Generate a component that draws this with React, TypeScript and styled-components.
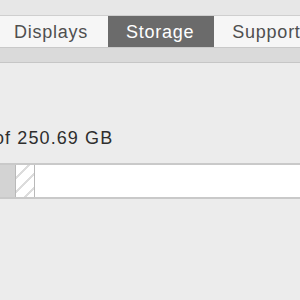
import styled, { createGlobalStyle } from 'styled-components';

const GlobalStyle = createGlobalStyle`
	html, body {
		margin: 0;
		padding: 0;
		background: #ececec;
	}
	body {
		width: 300px;
		height: 300px;
		overflow: hidden;
		font-family: 'Liberation Sans', Arial, sans-serif;
	}
`;

const tabs = ['Displays', 'Storage', 'Support'];
const activeTab = 'Storage';

const App = () => {
	return (
		<>
			<GlobalStyle />
			<Window>
				<Toolbar>
					<TabRow>
						{tabs.map((tab) => (
							<Tab key={tab} $active={tab === activeTab}>
								{tab}
							</Tab>
						))}
					</TabRow>
				</Toolbar>
				<Band />
				<Content>
					<Capacity>of 250.69 GB</Capacity>
					<StorageBar>
						<Segment $kind="used" $width={17} />
						<Segment $kind="purgeable" $width={19} />
						<Segment $kind="free" />
					</StorageBar>
				</Content>
			</Window>
		</>
	);
};

const Window = styled.div`
	width: 300px;
	height: 300px;
	overflow: hidden;
	display: flex;
	flex-direction: column;
	background: #ececec;
`;

const Toolbar = styled.div`
	background: #e7e7e7;
	padding-top: 15px;
`;

const TabRow = styled.div`
	display: flex;
	height: 32px;
	margin-left: -4px;
`;

const Tab = styled.div<{ $active: boolean }>`
	box-sizing: border-box;
	display: flex;
	align-items: center;
	padding: 1px 20px 0 18px;
	border-top: 1px solid #cfcfcf;
	background: ${({ $active }) => ($active ? '#6b6b6b' : '#f6f6f6')};
	color: ${({ $active }) => ($active ? '#ffffff' : '#4f4f4f')};
	font-size: 18px;
	letter-spacing: 0.75px;
	white-space: nowrap;
`;

const Band = styled.div`
	height: 14px;
	background: #dadada;
	border-top: 1px solid #c9c9c9;
	border-bottom: 1px solid #c6c6c6;
`;

const Content = styled.div`
	display: flex;
	flex-direction: column;
	padding-top: 64px;
`;

const Capacity = styled.div`
	margin-left: -6px;
	font-size: 18px;
	line-height: 22px;
	letter-spacing: 1.1px;
	color: #2e2e2e;
	white-space: nowrap;
`;

const StorageBar = styled.div`
	box-sizing: border-box;
	display: flex;
	height: 36px;
	width: 320px;
	margin-top: 14px;
	margin-left: -1px;
	background: #ffffff;
	border-top: 2px solid #c9c9c9;
	border-bottom: 2px solid #c9c9c9;
`;

const Segment = styled.div<{ $kind: 'used' | 'purgeable' | 'free'; $width?: number }>`
	box-sizing: border-box;
	flex: ${({ $width }) => ($width ? `0 0 ${$width}px` : '1')};
	border-right: ${({ $kind }) => ($kind === 'free' ? 'none' : '1px solid #b9b9b9')};
	background: ${({ $kind }) =>
		$kind === 'used'
			? '#d3d3d3'
			: $kind === 'purgeable'
			? 'repeating-linear-gradient(135deg, #ffffff 0 8px, #dcdcdc 8px 10px)'
			: '#ffffff'};
`;

export default App;
